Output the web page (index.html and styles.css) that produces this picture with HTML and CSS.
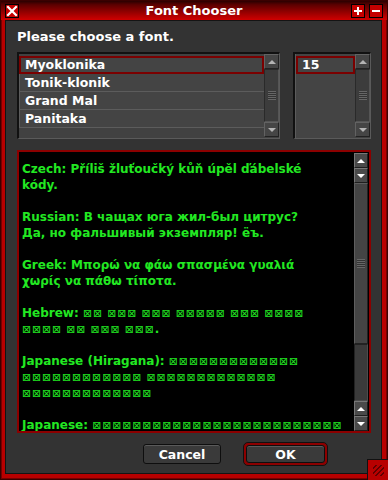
FILE: index.html
```
<!DOCTYPE html>
<html lang="en">
<head>
    <meta charset="UTF-8">
    <title>Font Chooser</title>
    <link rel="stylesheet" href="styles.css">
</head>
<body>
    <div class="window">
        <div class="titlebar">
            <div class="tb-left">
                <span class="tb-btn">
                    <svg width="14" height="14" viewBox="0 0 14 14">
                        <rect x="0" y="0" width="14" height="14" fill="#000"/>
                        <rect x="1" y="1" width="12" height="12" fill="#c40000"/>
                        <path d="M3 3 L11 11 M11 3 L3 11" stroke="#fff" stroke-width="2.2" stroke-linecap="square"/>
                    </svg>
                </span>
            </div>
            <span class="title">Font Chooser</span>
            <div class="tb-right">
                <span class="tb-btn">
                    <svg width="14" height="14" viewBox="0 0 14 14">
                        <rect x="0" y="0" width="14" height="14" fill="#000"/>
                        <rect x="1" y="1" width="12" height="12" fill="#c40000"/>
                        <path d="M3 6h8v2H3z M6 3h2v8H6z" fill="#fff"/>
                    </svg>
                </span>
                <span class="tb-btn">
                    <svg width="14" height="14" viewBox="0 0 14 14">
                        <rect x="0" y="0" width="14" height="14" fill="#000"/>
                        <rect x="1" y="1" width="12" height="12" fill="#c40000"/>
                        <path d="M3 6h8v2H3z" fill="#fff"/>
                    </svg>
                </span>
            </div>
        </div>

        <div class="client">
            <p class="prompt">Please choose a font.</p>

            <div class="lists">
                <div class="listbox fonts">
                    <ul class="items">
                        <li class="sel">Myoklonika</li>
                        <li>Tonik-klonik</li>
                        <li>Grand Mal</li>
                        <li>Panitaka</li>
                    </ul>
                    <div class="vscroll">
                        <span class="sbtn up"></span>
                        <span class="thumb"><i class="grip"></i></span>
                        <span class="sbtn down"></span>
                    </div>
                </div>
                <div class="listbox sizes">
                    <ul class="items plain">
                        <li class="sel">15</li>
                    </ul>
                    <div class="vscroll">
                        <span class="sbtn up"></span>
                        <span class="thumb"><i class="grip"></i></span>
                        <span class="sbtn down"></span>
                    </div>
                </div>
            </div>

            <div class="preview">
                <div class="sample">
                    <p>Czech: Příliš žluťoučký kůň úpěl ďábelské<br>kódy.</p>
                    <p>Russian: В чащах юга жил-был цитрус?<br>Да, но фальшивый экземпляр! ёъ.</p>
                    <p>Greek: Μπορώ να φάω σπασμένα γυαλιά<br>χωρίς να πάθω τίποτα.</p>
                    <p>Hebrew: <span class="nf">⊠⊠</span> <span class="nf">⊠⊠⊠</span> <span class="nf">⊠⊠⊠</span> <span class="nf">⊠⊠⊠⊠⊠</span> <span class="nf">⊠⊠⊠</span> <span class="nf">⊠⊠⊠⊠</span><br><span class="nf">⊠⊠⊠⊠</span> <span class="nf">⊠⊠</span> <span class="nf">⊠⊠⊠</span> <span class="nf">⊠⊠⊠</span>.</p>
                    <p>Japanese (Hiragana): <span class="nf">⊠⊠⊠⊠⊠⊠⊠⊠⊠⊠⊠⊠⊠</span><br><span class="nf">⊠⊠⊠⊠⊠⊠⊠⊠⊠⊠⊠⊠</span> <span class="nf">⊠⊠⊠⊠⊠⊠⊠⊠⊠⊠⊠⊠⊠</span><br><span class="nf">⊠⊠⊠⊠⊠⊠⊠⊠⊠⊠⊠⊠⊠</span></p>
                    <p>Japanese: <span class="nf">⊠⊠⊠⊠⊠⊠⊠⊠⊠⊠⊠⊠⊠⊠⊠⊠⊠⊠⊠⊠⊠⊠⊠⊠⊠</span></p>
                </div>
                <div class="vscroll pv">
                    <span class="sbtn up"></span>
                    <span class="sbtn down"></span>
                    <span class="thumb"><i class="grip"></i></span>
                    <span class="track"></span>
                    <span class="sbtn up"></span>
                    <span class="sbtn down"></span>
                </div>
            </div>

            <div class="actions">
                <button class="btn">Cancel</button>
                <span class="focus"><button class="btn">OK</button></span>
            </div>
        </div>

        <span class="resize"></span>
    </div>
</body>
</html>
```

FILE: styles.css
```
body {
    margin: 0;
    padding: 0;
    background-color: #000;
    font-family: "DejaVu Sans", sans-serif;
    font-weight: bold;
    color: white;
}

.window {
    position: relative;
    width: 388px;
    height: 480px;
    box-sizing: border-box;
    border: 1px solid #3a0000;
    background-color: #b80000;
    box-shadow: inset 0 0 0 1px #760000;
    display: flex;
    flex-direction: column;
}

.titlebar {
    height: 19px;
    display: grid;
    grid-template-columns: 1fr auto 1fr;
    align-items: center;
    padding: 0 4px;
    background: linear-gradient(to bottom, #2a0000, #5c0000 20%, #d00000);
}

.title {
    font-size: 13px;
    line-height: 19px;
    color: #fff;
}

.tb-left {
    display: flex;
}

.tb-right {
    display: flex;
    justify-content: flex-end;
    gap: 4px;
}

.tb-btn {
    display: block;
    width: 14px;
    height: 14px;
    margin-top: 1px;
}

.tb-btn svg {
    display: block;
}

.client {
    flex: 1;
    margin: 0 5px 5px 4px;
    border: 1px solid #141414;
    background-color: #333;
    padding: 0 10px 0 11px;
    display: flex;
    flex-direction: column;
}

.prompt {
    margin: 8px 0 0;
    font-size: 13px;
    line-height: 15px;
    height: 15px;
}

.lists {
    display: flex;
    gap: 13px;
    margin-top: 8px;
}

.listbox {
    height: 87px;
    box-sizing: border-box;
    display: flex;
    border-style: solid;
    border-width: 2px 1px 1px 2px;
    border-color: #111 #5a5a5a #5a5a5a #111;
    background-color: #414141;
}

.fonts {
    width: 263px;
}

.sizes {
    width: 78px;
}

.items {
    flex: 1;
    list-style: none;
    margin: 0;
    padding: 2px 0 0;
    font-size: 12.5px;
}

.items li {
    height: 18px;
    box-sizing: border-box;
    border-left: 1px solid #5c5c5c;
    border-bottom: 1px solid #5c5c5c;
    padding-left: 5px;
    line-height: 17px;
    background-color: #444;
}

.items li.sel {
    border: 2px solid #7a0000;
    padding-left: 4px;
    line-height: 14px;
}

.items.plain {
    border-left: 1px solid #5c5c5c;
    background-color: #444;
}

.vscroll {
    width: 15px;
    display: flex;
    flex-direction: column;
    padding-bottom: 1px;
}

.sbtn {
    height: 15px;
    flex: none;
    box-sizing: border-box;
    display: flex;
    align-items: center;
    justify-content: center;
    background-color: #454545;
    border: 1px solid;
    border-color: #626262 #222 #222 #626262;
}

.sbtn::after {
    content: "";
    border-left: 4px solid transparent;
    border-right: 4px solid transparent;
}

.sbtn.up::after {
    border-bottom: 4px solid #b4b4b4;
}

.sbtn.down::after {
    border-top: 4px solid #b4b4b4;
}

.thumb {
    flex: 1;
    display: flex;
    align-items: center;
    justify-content: center;
    background-color: #3c3c3c;
    border: 1px solid;
    border-color: #2a2a2a #555 #555 #2a2a2a;
}

.grip {
    width: 8px;
    height: 9px;
    background: repeating-linear-gradient(to bottom, #666 0 1px, #333 1px 2px);
}

.preview {
    margin-top: 11px;
    height: 283px;
    box-sizing: border-box;
    border: 2px solid #8c0000;
    background-color: #000;
    display: flex;
}

.sample {
    flex: 1;
    overflow: hidden;
    padding: 9px 0 0 3px;
    color: #22e822;
    font-size: 12px;
    line-height: 16px;
    white-space: nowrap;
}

.sample p {
    margin: 0 0 16px;
}

.nf {
    font-family: "DejaVu Sans", sans-serif;
    font-weight: normal;
    font-size: 11px;
    line-height: 10px;
    letter-spacing: 0.8px;
}

.vscroll.pv {
    width: 14px;
    padding: 1px 1px 0 0;
}

.pv .sbtn {
    background-color: #4a4a4a;
    border-color: #777 #1e1e1e #1e1e1e #777;
}

.pv .sbtn.up::after {
    border-bottom-color: #fff;
}

.pv .sbtn.down::after {
    border-top-color: #fff;
}

.pv .thumb {
    flex: 161;
    background-color: #444;
    border-color: #5e5e5e #222 #222 #5e5e5e;
}

.track {
    flex: 56;
    background-color: #3a3a3a;
    border: 1px solid;
    border-color: #222 #4c4c4c #4c4c4c #222;
}

.actions {
    display: flex;
    justify-content: flex-end;
    align-items: center;
    gap: 22px;
    margin: 9px 43px 0 0;
}

.btn {
    font-family: "DejaVu Sans", sans-serif;
    font-weight: bold;
    font-size: 12.5px;
    color: #fff;
    background-color: #3a3a3a;
    border: 1px solid #0e0e0e;
    border-radius: 3px;
    box-shadow: inset 0 1px 0 #5a5a5a;
    padding: 0;
    width: 78px;
    height: 20px;
    line-height: 17px;
}

.focus {
    display: flex;
    padding: 2px;
    border: 1px solid #111;
    border-radius: 5px;
    background-color: #8c0000;
}

.focus .btn {
    width: 79px;
    height: 18px;
    line-height: 15px;
}

.resize {
    position: absolute;
    right: -1px;
    bottom: -1px;
    width: 21px;
    height: 21px;
    box-sizing: border-box;
    border-top: 1px solid #111;
    border-left: 1px solid #111;
    background-color: #b80000;
}

.resize::after {
    content: "";
    position: absolute;
    right: 4px;
    bottom: 4px;
    width: 11px;
    height: 11px;
    background: repeating-linear-gradient(135deg, #b80000 0 2px, #600000 2px 3.5px);
}
```
